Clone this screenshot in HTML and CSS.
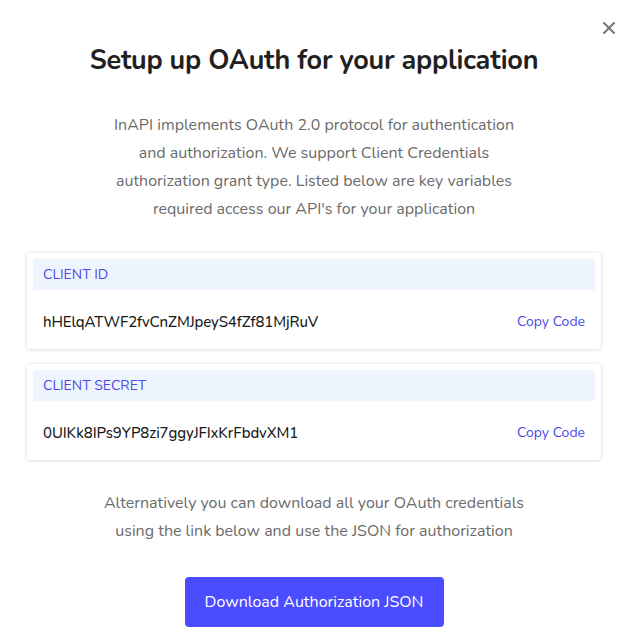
FILE: index.html
```html
<!DOCTYPE html>
<html lang="en">
<head>
<meta charset="utf-8">
<title>Setup OAuth</title>
<link rel="stylesheet" href="styles.css">
</head>
<body>
<div class="modal">
  <button class="close" aria-label="Close">
    <svg width="12" height="12" viewBox="0 0 12 12"><path d="M1 1L11 11M11 1L1 11" stroke="#7a7a7a" stroke-width="2.2" stroke-linecap="square"/></svg>
  </button>
  <h1 class="title">Setup up OAuth for your application</h1>
  <p class="intro">InAPI implements OAuth 2.0 protocol for authentication<br>and authorization. We support Client Credentials<br>authorization grant type. Listed below are key variables<br>required access our API's for your application</p>
  <div class="card">
    <div class="card-head">CLIENT ID</div>
    <div class="card-body">
      <span class="value">hHElqATWF2fvCnZMJpeyS4fZf81MjRuV</span>
      <a class="copy" href="#">Copy Code</a>
    </div>
  </div>
  <div class="card">
    <div class="card-head">CLIENT SECRET</div>
    <div class="card-body">
      <span class="value">0UIKk8IPs9YP8zi7ggyJFIxKrFbdvXM1</span>
      <a class="copy" href="#">Copy Code</a>
    </div>
  </div>
  <p class="alt">Alternatively you can download all your OAuth credentials<br>using the link below and use the JSON for authorization</p>
  <div class="actions">
    <button class="download">Download Authorization JSON</button>
  </div>
</div>
</body>
</html>
```
FILE: styles.css
```css
html, body {
  margin: 0;
  padding: 0;
  background: #fff;
}
body {
  font-family: "Nunito", "Noto Sans", "Open Sans", sans-serif;
  color: #222;
}
.modal {
  position: relative;
  padding: 43px 25px 0 27px;
  display: flex;
  flex-direction: column;
}
.close {
  position: absolute;
  top: 22px;
  right: 11px;
  width: 12px;
  height: 12px;
  padding: 0;
  border: 0;
  background: none;
  display: flex;
}
.title {
  margin: 0;
  font-size: 27px;
  line-height: 36px;
  font-weight: 700;
  text-align: center;
  color: #212121;
  letter-spacing: -0.2px;
}
.intro, .alt {
  margin: 32px 0 0;
  font-size: 16px;
  line-height: 28px;
  text-align: center;
  color: #6b6b6b;
}
.intro { margin-bottom: 30px; }
.card {
  background: #fff;
  border-radius: 3px;
  box-shadow: 0 0 4px rgba(0,0,0,0.12), 0 1px 3px rgba(0,0,0,0.06);
  padding: 6px;
  margin-bottom: 15px;
}
.card-head {
  background: #eef5ff;
  border-radius: 2px;
  height: 31px;
  padding-left: 10px;
  display: flex;
  align-items: center;
  font-size: 14px;
  color: #4a4ae6;
}
.card-body {
  display: flex;
  justify-content: space-between;
  align-items: center;
  padding: 21px 10px 10px;
  line-height: 22px;
}
.value {
  font-size: 15px;
  color: #1a1a1a;
  font-weight: 500;
  letter-spacing: -0.1px;
}
.copy {
  font-size: 14px;
  color: #4a4ae6;
  text-decoration: none;
}
.alt { margin-top: 14px; }
.actions {
  display: flex;
  justify-content: center;
  margin-top: 32px;
}
.download {
  width: 259px;
  height: 50px;
  border: 0;
  border-radius: 4px;
  background: #4b4bff;
  color: #fff;
  font-family: inherit;
  font-size: 16px;
}
```
